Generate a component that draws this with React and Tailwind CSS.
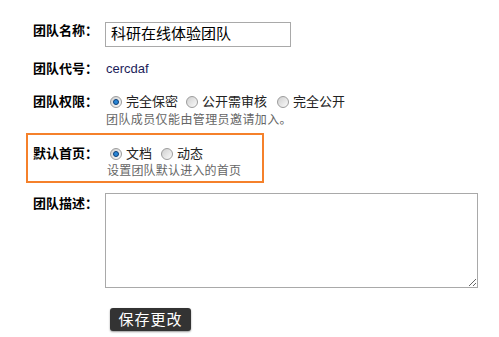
import React from 'react';

const font = { fontFamily: '"Liberation Sans", "Noto Sans CJK SC", sans-serif' };

function Radio({ checked, label, className = '' }) {
  return (
    <label className={`inline-flex items-center ${className}`}>
      <span className="mr-[4px] flex h-[12px] w-[12px] items-center justify-center rounded-full border border-[#9c9c9c] bg-gradient-to-br from-[#cfcfcf] to-[#fbfbfb]">
        {checked && <span className="h-[6px] w-[6px] rounded-full border border-[#0b3f78] bg-[#2a86d6]" />}
      </span>
      <span className="text-[13px] leading-[16px] text-[#222]">{label}</span>
    </label>
  );
}

export default function App() {
  return (
    <div className="h-[337px] w-[499px] bg-white pl-[33px] pt-[22px]" style={font}>
      <div className="flex items-start">
        <div className="mt-[1px] w-[72px] text-[13px] font-bold leading-[16px] text-black">团队名称：</div>
        <div className="flex h-[25px] w-[186px] items-center border border-[#a9a9a9] pl-[5px] text-[15px] text-black">
          科研在线体验团队
        </div>
      </div>

      <div className="mt-[14px] flex items-start">
        <div className="w-[72px] text-[13px] font-bold leading-[16px] text-black">团队代号：</div>
        <div className="pl-[1px] text-[13px] leading-[16px] text-[#1c1c5a]">cercdaf</div>
      </div>

      <div className="mt-[17px] flex items-start">
        <div className="w-[72px] text-[13px] font-bold leading-[16px] text-black">团队权限：</div>
        <div>
          <div className="flex items-center pl-[5px]">
            <Radio checked label="完全保密" className="mr-[8px]" />
            <Radio label="公开需审核" className="mr-[10px]" />
            <Radio label="完全公开" />
          </div>
          <div className="mt-[2px] pl-[1px] text-[12px] leading-[16px] tracking-[0.4px] text-[#666]">团队成员仅能由管理员邀请加入。</div>
        </div>
      </div>

      <div className="ml-[-7px] mt-[5px] w-[238px] border-2 border-[#f5812b] pb-[2px] pl-[5px] pt-[11px]">
        <div className="flex items-start">
          <div className="w-[72px] text-[13px] font-bold leading-[16px] text-black">默认首页：</div>
          <div>
            <div className="flex items-center pl-[5px]">
              <Radio checked label="文档" className="mr-[9px]" />
              <Radio label="动态" />
            </div>
            <div className="mt-[1px] pl-[2px] text-[12px] leading-[16px] tracking-[0.2px] text-[#666]">设置团队默认进入的首页</div>
          </div>
        </div>
      </div>

      <div className="mt-[10px] flex items-start">
        <div className="w-[72px] pt-[3px] text-[13px] font-bold leading-[16px] text-black">团队描述：</div>
        <textarea className="h-[95px] w-[373px] border border-[#a9a9a9] outline-none" defaultValue="" />
      </div>

      <div className="mt-[20px] pl-[77px]">
        <button className="h-[23px] w-[81px] rounded-[3px] bg-[#333] text-[15px] leading-[23px] tracking-[1px] text-white shadow-[0_1px_2px_rgba(0,0,0,0.4)]">
          保存更改
        </button>
      </div>
    </div>
  );
}
